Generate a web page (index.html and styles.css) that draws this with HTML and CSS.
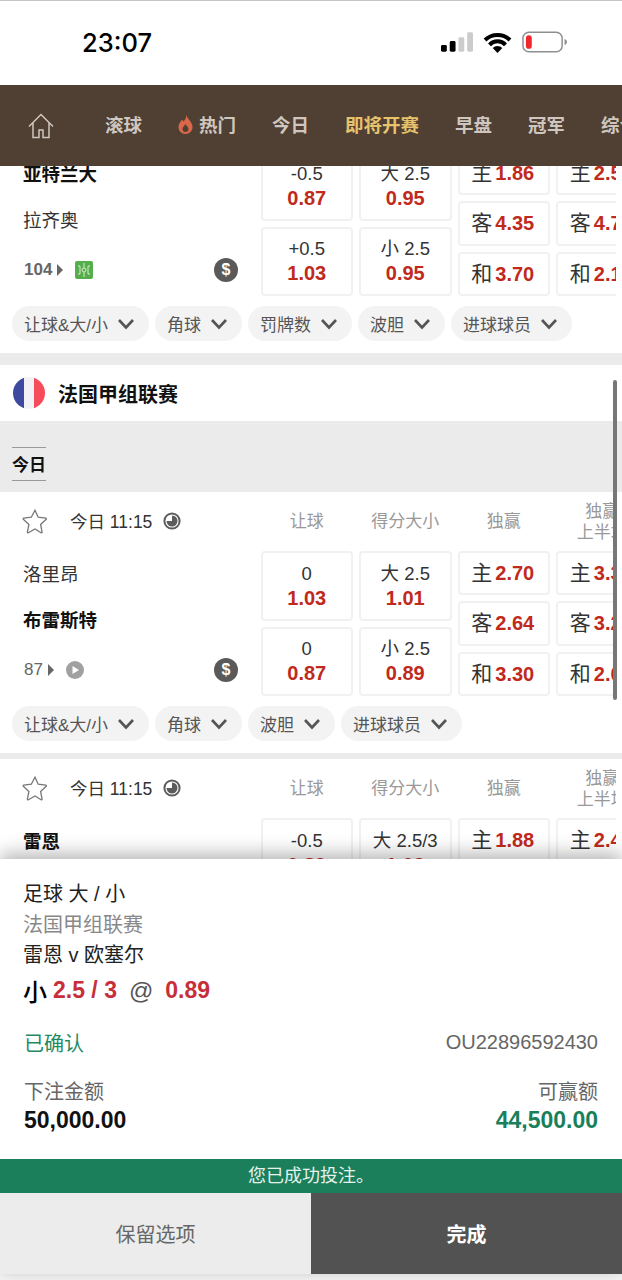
FILE: index.html
```html
<!DOCTYPE html>
<html lang="zh-CN">
<head>
    <meta charset="UTF-8">
    <meta name="viewport" content="width=device-width, initial-scale=1.0">
    <title>投注确认</title>
    <link rel="stylesheet" href="styles.css">
</head>
<body>
    <svg class="defs" width="0" height="0">
        <symbol id="chevron" viewBox="0 0 18 12"><path d="M2 2l7 7.5L16 2" fill="none" stroke="#555" stroke-width="2.6"/></symbol>
        <symbol id="star" viewBox="0 0 26 26"><path d="M13 2.2l3.2 7 7.6.9c.6.1.8.8.4 1.2l-5.6 5.2 1.5 7.5c.1.6-.5 1-1 .7L13 20.9l-6.6 3.8c-.5.3-1.1-.1-1-.7l1.5-7.5-5.6-5.2c-.4-.4-.2-1.100.4-1.200l7.600-.9z" fill="none" stroke="#777" stroke-width="1.3"/></symbol>
        <symbol id="clock" viewBox="0 0 18 18"><circle cx="9" cy="9" r="7.600" fill="none" stroke="#5c5c5c" stroke-width="2"/><path d="M9 3.500a5.500 5.500 0 1 1-5.500 5.500H9z" fill="#5c5c5c"/></symbol>
    </svg>

    <div class="page">
        <div class="status-bar">
            <span class="clock-time">23:07</span>
            <div class="status-icons">
                <svg width="32" height="20" viewBox="0 0 33 20">
                    <rect x="0" y="13" width="6" height="7" rx="1.500" fill="#000"/>
                    <rect x="9" y="9" width="6" height="11" rx="1.500" fill="#000"/>
                    <rect x="18" y="5" width="6" height="15" rx="1.500" fill="#ccc"/>
                    <rect x="27" y="0" width="6" height="20" rx="1.500" fill="#ccc"/>
                </svg>
                <svg class="wifi" width="29" height="21" viewBox="0 0 28 21">
                    <path d="M1.500 8a18 18 0 0 1 25 0M6 12.800a11 11 0 0 1 16 0" fill="none" stroke="#000" stroke-width="4"/>
                    <path d="M14 21l-4.800-5a6.800 6.800 0 0 1 9.600 0z" fill="#000"/>
                </svg>
                <svg width="45" height="22" viewBox="0 0 46 22">
                    <rect x="1" y="1" width="40" height="20" rx="6" fill="#fff" stroke="#8e8e8e" stroke-width="1.500"/>
                    <rect x="4" y="4" width="6" height="14" rx="3" fill="#f0282d"/>
                    <path d="M43.500 8v6c1.500-.5 2.500-1.600 2.500-3s-1-2.500-2.500-3z" fill="#8e8e8e"/>
                </svg>
            </div>
        </div>

        <nav class="top-nav">
            <svg class="home-icon" width="26" height="26" viewBox="0 0 26 26">
                <path d="M1 13.500L13 1.500l12 12M5 10v14.500h6V17h4v7.500h6V10" fill="none" stroke="#cfc7bf" stroke-width="1.500"/>
            </svg>
            <a>滚球</a>
            <a class="hot">
                <svg width="15" height="19" viewBox="0 0 15 19"><path d="M8 0c.6 3-1 4.800-2.500 6.600C5 5.800 4.600 5.200 4.300 4.500 2 7 .5 9.300.5 12c0 4 3 7 7 7s7-3 7-7c0-5-4.500-7.500-6.500-12zM7.500 17c-1.700 0-3-1.300-3-3 0-1.600 1.700-3 3-5 1.300 2 3 3.400 3 5 0 1.700-1.300 3-3 3z" fill="#d9684a"/></svg>
                热门
            </a>
            <a>今日</a>
            <a class="active">即将开赛</a>
            <a>早盘</a>
            <a>冠军</a>
            <a>综合</a>
        </nav>

        <div class="content">
            <div class="scroll-thumb"></div>

            <div class="match match-first">
                <div class="match-row">
                    <div class="teams">
                        <div class="team bold">亚特兰大</div>
                        <div class="team">拉齐奥</div>
                        <div class="meta">
                            <span class="count bold">104</span><span class="arrow"></span>
                            <svg class="pitch" width="18" height="18" viewBox="0 0 18 18">
                                <rect width="18" height="18" rx="2" fill="#55ad4c"/>
                                <path d="M9 2v14M3 5h2v8H3M15 5h-2v8h2" fill="none" stroke="#d5efc9" stroke-width="1"/>
                                <circle cx="9" cy="9" r="2" fill="#55ad4c" stroke="#d5efc9"/>
                            </svg>
                            <span class="dollar">$</span>
                        </div>
                    </div>
                    <div class="odds">
                        <div class="odds-col">
                            <div class="cell"><span>-0.5</span><b>0.87</b></div>
                            <div class="cell"><span>+0.5</span><b>1.03</b></div>
                        </div>
                        <div class="odds-col">
                            <div class="cell"><span>大 2.5</span><b>0.95</b></div>
                            <div class="cell"><span>小 2.5</span><b>0.95</b></div>
                        </div>
                        <div class="odds-col">
                            <div class="cell inline"><span>主</span><b>1.86</b></div>
                            <div class="cell inline"><span>客</span><b>4.35</b></div>
                            <div class="cell inline"><span>和</span><b>3.70</b></div>
                        </div>
                        <div class="odds-col">
                            <div class="cell inline"><span>主</span><b>2.55</b></div>
                            <div class="cell inline"><span>客</span><b>4.70</b></div>
                            <div class="cell inline"><span>和</span><b>2.10</b></div>
                        </div>
                    </div>
                </div>
                <div class="chips">
                    <div class="chip">让球&amp;大/小<svg><use href="#chevron"/></svg></div>
                    <div class="chip">角球<svg><use href="#chevron"/></svg></div>
                    <div class="chip">罚牌数<svg><use href="#chevron"/></svg></div>
                    <div class="chip">波胆<svg><use href="#chevron"/></svg></div>
                    <div class="chip">进球球员<svg><use href="#chevron"/></svg></div>
                </div>
            </div>

            <div class="gap-wide"></div>

            <div class="league">
                <span class="flag"></span>
                <span class="league-name">法国甲组联赛</span>
            </div>
            <div class="tab-band">
                <span class="tab">今日</span>
            </div>

            <div class="match">
                <div class="match-head">
                    <div class="when">
                        <svg class="star"><use href="#star"/></svg>
                        <span>今日 11:15</span>
                        <svg class="clock"><use href="#clock"/></svg>
                    </div>
                    <div class="col-label">让球</div>
                    <div class="col-label">得分大小</div>
                    <div class="col-label">独赢</div>
                    <div class="col-label">独赢<br>上半场</div>
                </div>
                <div class="match-row">
                    <div class="teams">
                        <div class="team">洛里昂</div>
                        <div class="team bold">布雷斯特</div>
                        <div class="meta">
                            <span class="count">87</span><span class="arrow"></span>
                            <svg class="play" width="18" height="18" viewBox="0 0 18 18">
                                <circle cx="9" cy="9" r="9" fill="#a0a0a0"/>
                                <path d="M6.500 5v8l6.500-4z" fill="#fff"/>
                            </svg>
                            <span class="dollar">$</span>
                        </div>
                    </div>
                    <div class="odds">
                        <div class="odds-col">
                            <div class="cell"><span>0</span><b>1.03</b></div>
                            <div class="cell"><span>0</span><b>0.87</b></div>
                        </div>
                        <div class="odds-col">
                            <div class="cell"><span>大 2.5</span><b>1.01</b></div>
                            <div class="cell"><span>小 2.5</span><b>0.89</b></div>
                        </div>
                        <div class="odds-col">
                            <div class="cell inline"><span>主</span><b>2.70</b></div>
                            <div class="cell inline"><span>客</span><b>2.64</b></div>
                            <div class="cell inline"><span>和</span><b>3.30</b></div>
                        </div>
                        <div class="odds-col">
                            <div class="cell inline"><span>主</span><b>3.30</b></div>
                            <div class="cell inline"><span>客</span><b>3.20</b></div>
                            <div class="cell inline"><span>和</span><b>2.05</b></div>
                        </div>
                    </div>
                </div>
                <div class="chips">
                    <div class="chip">让球&amp;大/小<svg><use href="#chevron"/></svg></div>
                    <div class="chip">角球<svg><use href="#chevron"/></svg></div>
                    <div class="chip">波胆<svg><use href="#chevron"/></svg></div>
                    <div class="chip">进球球员<svg><use href="#chevron"/></svg></div>
                </div>
            </div>

            <div class="gap-thin"></div>

            <div class="match">
                <div class="match-head">
                    <div class="when">
                        <svg class="star"><use href="#star"/></svg>
                        <span>今日 11:15</span>
                        <svg class="clock"><use href="#clock"/></svg>
                    </div>
                    <div class="col-label">让球</div>
                    <div class="col-label">得分大小</div>
                    <div class="col-label">独赢</div>
                    <div class="col-label">独赢<br>上半场</div>
                </div>
                <div class="match-row">
                    <div class="teams">
                        <div class="team bold">雷恩</div>
                        <div class="team">欧塞尔</div>
                    </div>
                    <div class="odds">
                        <div class="odds-col">
                            <div class="cell"><span>-0.5</span><b>0.89</b></div>
                            <div class="cell"><span>+0.5</span><b>1.01</b></div>
                        </div>
                        <div class="odds-col">
                            <div class="cell"><span>大 2.5/3</span><b>1.03</b></div>
                            <div class="cell"><span>小 2.5/3</span><b>0.89</b></div>
                        </div>
                        <div class="odds-col">
                            <div class="cell inline"><span>主</span><b>1.88</b></div>
                            <div class="cell inline"><span>客</span><b>4.10</b></div>
                            <div class="cell inline"><span>和</span><b>3.60</b></div>
                        </div>
                        <div class="odds-col">
                            <div class="cell inline"><span>主</span><b>2.45</b></div>
                            <div class="cell inline"><span>客</span><b>4.60</b></div>
                            <div class="cell inline"><span>和</span><b>2.10</b></div>
                        </div>
                    </div>
                </div>
            </div>
        </div>

        <div class="bet-sheet">
            <div class="bet-info">
                <div class="bet-line">足球 大 / 小</div>
                <div class="bet-line muted">法国甲组联赛</div>
                <div class="bet-line">雷恩 v 欧塞尔</div>
                <div class="bet-pick">
                    <span class="pick-side">小</span>
                    <b>2.5 / 3</b>
                    <span class="pick-at">@</span>
                    <b>0.89</b>
                </div>
            </div>
            <div class="bet-row confirm-row">
                <span class="confirmed">已确认</span>
                <span class="bet-ref">OU22896592430</span>
            </div>
            <div class="bet-row amount-row">
                <div>
                    <div class="amount-label">下注金额</div>
                    <div class="amount">50,000.00</div>
                </div>
                <div class="align-right">
                    <div class="amount-label">可赢额</div>
                    <div class="amount win">44,500.00</div>
                </div>
            </div>
            <div class="success-bar">您已成功投注。</div>
            <div class="sheet-buttons">
                <button class="btn-keep">保留选项</button>
                <button class="btn-done">完成</button>
            </div>
        </div>
    </div>
</body>
</html>
```

FILE: styles.css
```css
* {
    margin: 0;
    padding: 0;
    box-sizing: border-box;
    font-family: "Liberation Sans", "Noto Sans CJK SC", sans-serif;
}

body {
    background: #fff;
}

.defs {
    display: block;
    height: 0;
}

.page {
    width: 622px;
    height: 1280px;
    display: flex;
    flex-direction: column;
    overflow: hidden;
    background: #f6f6f6;
}

.status-bar {
    flex: none;
    height: 85px;
    background: #fff;
    border-top: 1px solid #c4c4c4;
    display: flex;
    align-items: center;
    padding: 0 55px 2px 82px;
    justify-content: space-between;
}

.clock-time {
    font-family: Inter, sans-serif;
    font-size: 25.500px;
    font-weight: 500;
    color: #000;
}

.status-icons {
    display: flex;
    align-items: center;
    gap: 10px;
}

.top-nav {
    flex: none;
    height: 81px;
    background: #503f33;
    display: flex;
    align-items: center;
    gap: 36px;
    padding: 0 0 3px 28px;
    white-space: nowrap;
    position: relative;
    z-index: 2;
}

.top-nav a {
    color: #cfc7bf;
    font-size: 18.500px;
    font-weight: 700;
    display: flex;
    align-items: center;
    gap: 6px;
    flex: none;
}

.top-nav a.active {
    color: #e6c26c;
}

.home-icon {
    flex: none;
    margin: 4px 15px 0 0;
}

.content {
    flex: none;
    height: 693px;
    background: #fff;
    position: relative;
    overflow: hidden;
}

.scroll-thumb {
    position: absolute;
    left: 613px;
    top: 214px;
    width: 4px;
    height: 320px;
    background: #777;
    border-radius: 2px;
    z-index: 1;
}

.match {
    width: 616px;
    overflow: hidden;
}

.match-first {
    margin-top: -15px;
}

.match-head {
    height: 59px;
    display: flex;
    align-items: center;
    gap: 6px;
}

.when {
    width: 254.500px;
    flex: none;
    display: flex;
    align-items: center;
    padding: 0 0 2px 22px;
    font-size: 17.500px;
    color: #333;
}

.star {
    width: 26px;
    height: 26px;
    margin-right: 22px;
}

.clock {
    width: 18px;
    height: 18px;
    margin-left: 11px;
}

.col-label {
    width: 92.500px;
    flex: none;
    text-align: center;
    font-size: 17px;
    line-height: 21px;
    color: #999;
}

.match-row {
    display: flex;
}

.teams {
    width: 260.500px;
    flex: none;
    display: flex;
    flex-direction: column;
    margin-top: -1px;
    padding-left: 23px;
    padding-right: 22.500px;
}

.team {
    height: 46px;
    display: flex;
    align-items: center;
    font-size: 18.500px;
    color: #333;
}

.bold {
    font-weight: 700;
}

.team.bold {
    color: #111;
}

.meta {
    flex: 1;
    display: flex;
    align-items: center;
    padding: 2px 0 0 1px;
    color: #666;
    font-size: 17px;
}

.arrow {
    width: 0;
    height: 0;
    margin-left: 5px;
    border-left: 6px solid #666;
    border-top: 6px solid transparent;
    border-bottom: 6px solid transparent;
}

.pitch,
.play {
    margin-left: 12px;
}

.dollar {
    width: 24px;
    height: 24px;
    margin-left: auto;
    border-radius: 50%;
    background: #5a5a5a;
    color: #fff;
    font-size: 16px;
    font-weight: 700;
    line-height: 24px;
    text-align: center;
}

.odds {
    height: 145px;
    display: flex;
    gap: 6px;
}

.odds-col {
    width: 92.500px;
    flex: none;
    display: flex;
    flex-direction: column;
    gap: 6px;
}

.cell {
    flex: 1;
    display: flex;
    flex-direction: column;
    align-items: center;
    justify-content: center;
    border: 2px solid #f1f1f1;
    border-radius: 4px;
    background: #fff;
    font-size: 18.500px;
    line-height: 24px;
    color: #333;
}

.cell b {
    color: #bf2a1c;
    font-size: 20px;
}

.cell.inline {
    flex-direction: row;
    gap: 3px;
    padding-right: 2px;
}

.cell.inline span {
    font-size: 21px;
}

.chips {
    display: flex;
    gap: 6px;
    padding: 10px 0 12px 12px;
}

.chip {
    height: 35px;
    display: flex;
    align-items: center;
    gap: 9px;
    padding: 0 14px 0 12px;
    border-radius: 18px;
    background: #f3f3f3;
    color: #555;
    font-size: 17px;
    white-space: nowrap;
}

.chip svg {
    width: 18px;
    height: 12px;
}

.gap-wide {
    height: 12px;
    background: #ebebeb;
}

.gap-thin {
    height: 6px;
    background: #ebebeb;
}

.league {
    height: 56px;
    display: flex;
    align-items: center;
    gap: 13px;
    padding-left: 13px;
}

.flag {
    width: 32px;
    height: 32px;
    border-radius: 50%;
    background: linear-gradient(90deg, #3d4a9f 33%, #f1f1f6 33%, #f1f1f6 67%, #f64b5a 67%);
}

.league-name {
    font-size: 20px;
    font-weight: 700;
    color: #111;
}

.tab-band {
    height: 71px;
    background: #ebebeb;
    padding: 26px 0 0 12px;
}

.tab {
    display: inline-block;
    height: 34px;
    line-height: 36px;
    border-top: 1px solid #999;
    border-bottom: 1px solid #999;
    font-size: 17px;
    font-weight: 700;
    color: #111;
}

.bet-sheet {
    flex: none;
    height: 415px;
    background: #fff;
    position: relative;
    z-index: 1;
    box-shadow: 0 -5px 18px rgba(0, 0, 0, 0.3);
    display: flex;
    flex-direction: column;
}

.bet-info {
    padding: 20px 24px 0 23px;
}

.bet-line {
    font-size: 20px;
    line-height: 30.500px;
    color: #222;
}

.bet-line.muted {
    color: #888;
}

.bet-pick {
    display: flex;
    align-items: center;
    gap: 6px;
    height: 40px;
    font-size: 23px;
}

.bet-pick b {
    color: #c62f3a;
}

.pick-side {
    font-size: 24px;
    font-weight: 500;
    color: #000;
}

.pick-at {
    font-size: 24px;
    color: #555;
    margin: 0 6px;
}

.bet-row {
    display: flex;
    justify-content: space-between;
    padding: 0 24px;
}

.confirm-row {
    margin-top: 17px;
    align-items: center;
    height: 30px;
}

.confirmed {
    color: #1f8a5f;
    font-size: 20px;
}

.bet-ref {
    color: #666;
    font-size: 20px;
}

.amount-row {
    margin-top: 21px;
}

.amount-label {
    color: #666;
    font-size: 20px;
    line-height: 27px;
}

.amount {
    color: #111;
    font-size: 23px;
    font-weight: 700;
    line-height: 28px;
}

.amount.win {
    color: #1a7f5a;
}

.align-right {
    text-align: right;
}

.success-bar {
    margin-top: auto;
    height: 34px;
    background: #1a7f5a;
    color: #e6f2ec;
    font-size: 18px;
    line-height: 34px;
    text-align: center;
}

.sheet-buttons {
    height: 81px;
    display: flex;
}

.sheet-buttons button {
    border: none;
    font-size: 20px;
}

.btn-keep {
    width: 311px;
    background: #ececec;
    color: #666;
}

.btn-done {
    flex: 1;
    background: #525252;
    color: #fff;
    font-weight: 700;
}
```
